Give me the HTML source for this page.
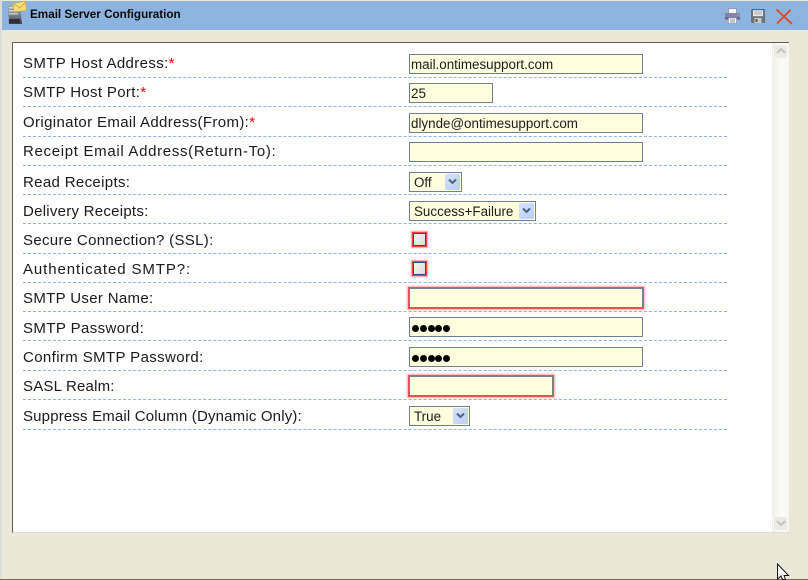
<!DOCTYPE html>
<html><head><meta charset="utf-8"><title>Email Server Configuration</title>
<style>
html,body{margin:0;padding:0}
body{width:808px;height:580px;position:relative;overflow:hidden;background:#ebe8d8;font-family:"Liberation Sans",sans-serif;color:#000}
.a{position:absolute;box-sizing:border-box}
.l{position:absolute;left:23px;font-size:15px;letter-spacing:.2px;line-height:16px;white-space:nowrap;color:#1a1a1a}
.l b{color:#f00;font-weight:normal}
.d{position:absolute;left:23px;width:704px;height:0;border-top:1px dashed #8cb6de}
.i{position:absolute;box-sizing:border-box;left:409px;height:20px;background:#ffffe0;border:1px solid #708090;font-size:13.4px;line-height:20px;padding-left:1px;white-space:nowrap;color:#1a1a1a}
.r{box-shadow:0 0 0 1px #f0505a,0 0 2px 2px #ffa8a8}
.dots{font-size:0;padding:4px 0 0 2px}
.dots i{display:inline-block;width:7px;height:7px;border-radius:50%;background:#000;margin-right:.8px}
.ar{position:absolute;top:1px;right:1px;width:15px;height:16px;background:linear-gradient(135deg,#d6e4fc,#b8cef6);border-radius:1px}
.c{position:absolute;box-sizing:border-box;left:413px;width:13px;height:13px;border:1px solid #1c5180;background:linear-gradient(135deg,#f6f6f2,#dcdcd6);box-shadow:0 0 0 1px #f8434c,0 0 1px 2px #ff9a9a}
</style></head><body>
<div class="a" style="left:0;top:0;width:2px;height:580px;background:#dcdcd8"></div>
<div class="a" style="left:2px;top:1px;width:806px;height:29px;background:#8cb4de"></div>
<div class="a" style="left:0;top:579px;width:808px;height:1px;background:#6b6858"></div>

<svg class="a" style="left:6px;top:0" width="22" height="26" viewBox="0 0 22 26">
<defs><linearGradient id="sv" x1="0" y1="0" x2="0" y2="1"><stop offset="0" stop-color="#a8b0ba"/><stop offset=".55" stop-color="#79818c"/><stop offset="1" stop-color="#3a3e46"/></linearGradient></defs>
<path d="M2 5L14 4L16 24L3 24Z" fill="url(#sv)"/>
<rect x="3" y="7" width="9" height="1.5" fill="#d4d8de"/><rect x="3" y="10" width="9" height="1.5" fill="#d4d8de"/><rect x="3" y="13" width="9" height="1.5" fill="#c4c8ce"/>
<rect x="3" y="19" width="11" height="4" fill="#2c3038"/>
<path d="M7 3.5L19.5 1L20.5 10.5L8 12Z" fill="#f6dc78" stroke="#c9a63c" stroke-width=".7"/>
<path d="M8 4L14 8L19.5 2" fill="none" stroke="#c09a34" stroke-width=".7"/>
</svg>
<div class="a" style="left:30px;top:7px;font-size:11.7px;line-height:16px;font-weight:bold;white-space:nowrap;color:#0a0a0a">Email Server Configuration</div>

<svg class="a" style="left:725px;top:8px" width="15" height="16" viewBox="0 0 15 16">
<rect x="3.5" y="0.5" width="8" height="5" fill="#f4f4f8" stroke="#8f8bab" stroke-width=".8"/>
<rect x="0" y="5" width="15" height="6.5" rx="1" fill="#8581a8"/>
<rect x="0" y="9.5" width="15" height="2" fill="#5f5b84"/>
<rect x="12" y="6.5" width="1.5" height="1" fill="#9ad06a"/>
<rect x="3.5" y="10" width="8" height="5.5" fill="#fff" stroke="#8f8bab" stroke-width=".6"/>
<rect x="5" y="11.5" width="5" height="1" fill="#888"/><rect x="5" y="13.5" width="5" height="1" fill="#888"/>
</svg>
<svg class="a" style="left:751px;top:9px" width="14" height="14" viewBox="0 0 14 14">
<rect x="0" y="0" width="14" height="14" rx="1" fill="#6e7278"/>
<rect x="1" y="0" width="12" height="1.2" fill="#2a6cb0"/>
<rect x="2" y="1.2" width="10" height="6" fill="#e8eaec"/>
<rect x="3" y="2.5" width="8" height="1" fill="#a8acb0"/><rect x="3" y="4.5" width="8" height="1" fill="#a8acb0"/>
<rect x="3.5" y="9" width="7" height="5" fill="#c8cacc"/><rect x="4.5" y="10" width="2" height="3" fill="#55585e"/>
</svg>
<svg class="a" style="left:775px;top:8px" width="18" height="17" viewBox="0 0 18 17">
<path d="M1.5 1.5L17 16M15.5 2L2 15.5" fill="none" stroke="#f0401c" stroke-width="1.7"/>
</svg>

<div class="a" style="left:12px;top:42px;width:777px;height:491px;background:#fff;border-left:1px solid #5e5c50;border-top:1px solid #5e5c50;border-bottom:1px solid #e0ded6"></div>
<div class="a" style="left:772px;top:43px;width:17px;height:489px;background:linear-gradient(90deg,#f0efe8,#fbfbf8 60%,#f6f5f0)"></div>
<div class="a" style="left:773px;top:44px;width:15px;height:15px;background:#ecebe3;border:1px solid #f8f8f4;border-radius:2px"></div>
<div class="a" style="left:773px;top:516px;width:15px;height:15px;background:#ecebe3;border:1px solid #f8f8f4;border-radius:2px"></div>
<svg class="a" style="left:776px;top:47px" width="10" height="8" viewBox="0 0 10 8"><path d="M1 6L5 2L9 6" fill="none" stroke="#c4c3bb" stroke-width="2"/></svg>
<svg class="a" style="left:776px;top:519px" width="10" height="8" viewBox="0 0 10 8"><path d="M1 2L5 6L9 2" fill="none" stroke="#c4c3bb" stroke-width="2"/></svg>

<div class="l" style="top:56px;letter-spacing:.37px">SMTP Host Address:<b>*</b></div>
<div class="l" style="top:85px;letter-spacing:.33px">SMTP Host Port:<b>*</b></div>
<div class="l" style="top:115px;letter-spacing:.36px">Originator Email Address(From):<b>*</b></div>
<div class="l" style="top:144px;letter-spacing:.68px">Receipt Email Address(Return-To):</div>
<div class="l" style="top:175px;letter-spacing:.34px">Read Receipts:</div>
<div class="l" style="top:204px;letter-spacing:.26px">Delivery Receipts:</div>
<div class="l" style="top:233px;letter-spacing:.32px">Secure Connection? (SSL):</div>
<div class="l" style="top:262px;letter-spacing:.9px">Authenticated SMTP?:</div>
<div class="l" style="top:291px;letter-spacing:.33px">SMTP User Name:</div>
<div class="l" style="top:321px;letter-spacing:.4px">SMTP Password:</div>
<div class="l" style="top:350px;letter-spacing:.38px">Confirm SMTP Password:</div>
<div class="l" style="top:379px">SASL Realm:</div>
<div class="l" style="top:409px;letter-spacing:.17px">Suppress Email Column (Dynamic Only):</div>

<div class="d" style="top:77px"></div>
<div class="d" style="top:106px"></div>
<div class="d" style="top:136px"></div>
<div class="d" style="top:165px"></div>
<div class="d" style="top:194px"></div>
<div class="d" style="top:223px"></div>
<div class="d" style="top:253px"></div>
<div class="d" style="top:282px"></div>
<div class="d" style="top:311px"></div>
<div class="d" style="top:340px"></div>
<div class="d" style="top:370px"></div>
<div class="d" style="top:399px"></div>
<div class="d" style="top:429px"></div>

<div class="i" style="top:54px;width:234px">mail.ontimesupport.com</div>
<div class="i" style="top:83px;width:84px">25</div>
<div class="i" style="top:113px;width:234px">dlynde@ontimesupport.com</div>
<div class="i" style="top:142px;width:234px"></div>

<div class="i" style="top:172px;width:53px;padding-left:4px">Off<span class="ar"></span>
<svg class="a" style="right:3px;top:5px" width="11" height="7" viewBox="0 0 11 7"><path d="M2 1.5L5.5 5L9 1.5" fill="none" stroke="#4d6185" stroke-width="2"/></svg></div>
<div class="i" style="top:201px;width:127px;padding-left:4px">Success+Failure<span class="ar"></span>
<svg class="a" style="right:3px;top:5px" width="11" height="7" viewBox="0 0 11 7"><path d="M2 1.5L5.5 5L9 1.5" fill="none" stroke="#4d6185" stroke-width="2"/></svg></div>

<div class="c" style="top:233px"></div>
<div class="c" style="top:262px"></div>

<div class="i r" style="top:288px;width:234px"></div>
<div class="i dots" style="top:317px;width:234px"><i></i><i></i><i></i><i></i><i></i></div>
<div class="i dots" style="top:347px;width:234px"><i></i><i></i><i></i><i></i><i></i></div>
<div class="i r" style="top:376px;width:144px"></div>
<div class="i" style="top:406px;width:61px;padding-left:4px">True<span class="ar"></span>
<svg class="a" style="right:3px;top:5px" width="11" height="7" viewBox="0 0 11 7"><path d="M2 1.5L5.5 5L9 1.5" fill="none" stroke="#4d6185" stroke-width="2"/></svg></div>

<svg class="a" style="left:776px;top:563px" width="16" height="17" viewBox="0 0 16 17">
<path d="M1.5 1L1.5 16L5 13L6.5 16.5L9.5 16.5L8 12.5L12.5 12.5Z" fill="#fff" stroke="#111" stroke-width="1"/>
</svg>
</body></html>
